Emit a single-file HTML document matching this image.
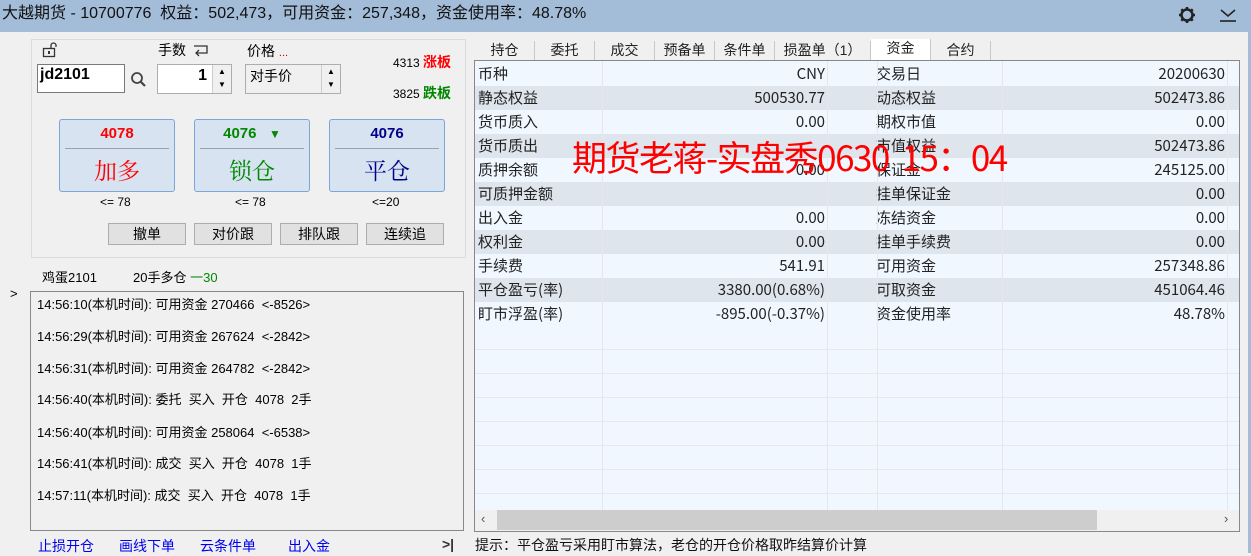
<!DOCTYPE html>
<html><head><meta charset="utf-8"><style>
*{margin:0;padding:0;box-sizing:border-box}
body{width:1251px;height:553px;background:#f0f0f0;position:relative;overflow:hidden;font-family:"Liberation Sans","Noto Sans CJK SC",sans-serif;font-size:13px;color:#000}
.a{position:absolute;white-space:nowrap}
.top{left:0;top:0;width:1251px;height:32px;background:#a3bcd8;font-size:16px;line-height:28px;padding-left:2px;color:#111}
.bb{position:absolute;width:116px;height:73px;background:#d7e3f1;border:1px solid #7aa6d8;border-radius:3px}
.bb .n{position:absolute;top:5px;left:0;width:100%;text-align:center;font-weight:bold;font-size:15px}
.bb .l{position:absolute;top:28px;left:5px;right:5px;border-top:1px solid #a0a0a0}
.bb .t{position:absolute;top:33px;left:0;width:100%;text-align:center;font-family:"Noto Serif CJK SC",serif;font-size:23px}
.sb{position:absolute;top:223px;width:78px;height:22px;background:#e1e1e1;border:1px solid #adadad;text-align:center;font-size:14px;line-height:20px}
.tab{position:absolute;top:41px;height:20px;width:60px;text-align:center;font-size:14px;line-height:19px;border-right:1px solid #c8c8c8;color:#222}
.row{position:absolute;left:475px;width:764px;height:24px;font-family:"Noto Sans CJK SC",sans-serif;font-size:15px;line-height:23px;color:#222}
.row span{position:absolute;top:0}
.vl{position:absolute;top:61px;height:449px;border-left:1px solid #e4e8ee}
.log{position:absolute;left:37px;font-size:13px}
.lk{position:absolute;top:536px;color:#0000ee;font-size:14px}
</style></head><body>
<div class="a top">大越期货 - 10700776&nbsp; 权益：502,473，可用资金：257,348，资金使用率：48.78%</div>
<svg class="a" style="left:1176px;top:5px" width="22" height="20" viewBox="0 0 22 20"><circle cx="11" cy="10" r="5.5" fill="none" stroke="#222" stroke-width="2.5"/><g stroke="#222" stroke-width="2.5"><line x1="11" y1="2" x2="11" y2="4.5"/><line x1="11" y1="15.5" x2="11" y2="18"/><line x1="3" y1="10" x2="5.5" y2="10"/><line x1="16.5" y1="10" x2="19" y2="10"/><line x1="5.3" y1="4.3" x2="7" y2="6"/><line x1="15" y1="14" x2="16.7" y2="15.7"/><line x1="5.3" y1="15.7" x2="7" y2="14"/><line x1="15" y1="6" x2="16.7" y2="4.3"/></g></svg>
<svg class="a" style="left:1218px;top:6px" width="20" height="18"><polyline points="3,4 10,10 17,4" fill="none" stroke="#222" stroke-width="1.6"/><line x1="2" y1="15" x2="18" y2="15" stroke="#222" stroke-width="1.6"/></svg>
<div class="a" style="left:1248px;top:32px;width:3px;height:521px;background:#a3bcd8"></div>

<div class="a" style="left:31px;top:39px;width:435px;height:219px;border:1px solid #dcdcdc"></div>
<svg class="a" style="left:42px;top:42px" width="18" height="16"><rect x="1.5" y="6.5" width="11" height="8" fill="none" stroke="#333" stroke-width="1.3"/><rect x="6" y="9" width="2" height="3" fill="#333"/><path d="M9 6.5V3.5a2.5 2.5 0 0 1 5 0V5" fill="none" stroke="#333" stroke-width="1.3"/></svg>
<div class="a" style="left:158px;top:40px;font-size:14px">手数</div>
<svg class="a" style="left:192px;top:44px" width="18" height="14"><path d="M2 2h13v7H5" fill="none" stroke="#333" stroke-width="1.3"/><path d="M7 6l-3 3 3 3" fill="none" stroke="#333" stroke-width="1.3"/></svg>
<div class="a" style="left:247px;top:41px;font-size:14px">价格 <span style="color:#c00;font-size:11px">...</span></div>
<div class="a" style="left:393px;top:52px;font-size:12px">4313 <span style="color:#f00;font-weight:bold;font-size:14px">涨板</span></div>
<div class="a" style="left:393px;top:83px;font-size:12px">3825 <span style="color:#080;font-weight:bold;font-size:14px">跌板</span></div>
<div class="a" style="left:37px;top:64px;width:88px;height:29px;background:#fff;border:1px solid #7a7a7a;font-weight:bold;font-size:16px;padding:1px 2px">jd2101</div>
<svg class="a" style="left:130px;top:71px" width="17" height="17"><circle cx="7" cy="7" r="5" fill="none" stroke="#444" stroke-width="1.8"/><line x1="10.5" y1="10.5" x2="15" y2="15" stroke="#444" stroke-width="2.2"/></svg>
<div class="a" style="left:157px;top:64px;width:75px;height:30px;background:#fff;border:1px solid #adadad"><span class="a" style="right:24px;top:2px;font-weight:bold;font-size:16px">1</span><div class="a" style="right:0;top:0;width:19px;height:28px;background:#f0f0f0;border-left:1px solid #ccc;font-size:8px;text-align:center;line-height:13px">▲<br>▼</div></div>
<div class="a" style="left:245px;top:64px;width:96px;height:30px;background:#f0f0f0;border:1px solid #adadad"><span class="a" style="left:4px;top:1px;font-size:14px">对手价</span><div class="a" style="right:0;top:0;width:19px;height:28px;background:#f0f0f0;border-left:1px solid #ccc;font-size:8px;text-align:center;line-height:13px">▲<br>▼</div></div>

<div class="bb" style="left:59px;top:119px"><div class="n" style="color:#f00">4078</div><div class="l"></div><div class="t" style="color:#f00">加多</div></div>
<div class="bb" style="left:194px;top:119px"><div class="n" style="color:#080">4076 &nbsp; <span style="font-size:12px">▼</span></div><div class="l"></div><div class="t" style="color:#080">锁仓</div></div>
<div class="bb" style="left:329px;top:119px"><div class="n" style="color:#008">4076</div><div class="l"></div><div class="t" style="color:#008">平仓</div></div>
<div class="a" style="left:100px;top:195px;font-size:12px">&lt;= 78</div>
<div class="a" style="left:235px;top:195px;font-size:12px">&lt;= 78</div>
<div class="a" style="left:372px;top:195px;font-size:12px">&lt;=20</div>
<div class="sb" style="left:108px">撤单</div><div class="sb" style="left:194px">对价跟</div><div class="sb" style="left:280px">排队跟</div><div class="sb" style="left:366px">连续追</div>
<div class="a" style="left:42px;top:267px;font-size:13px">鸡蛋2101</div>
<div class="a" style="left:133px;top:267px;font-size:13px">20手多仓 <span style="color:#080">一</span><span style="color:#080">30</span></div>
<div class="a" style="left:10px;top:286px;font-size:13px">&gt;</div>
<div class="a" style="left:30px;top:291px;width:434px;height:240px;border:1px solid #888"></div>
<div class="log" style="top:294px">14:56:10(本机时间): 可用资金 270466&nbsp; &lt;-8526&gt;</div>
<div class="log" style="top:326px">14:56:29(本机时间): 可用资金 267624&nbsp; &lt;-2842&gt;</div>
<div class="log" style="top:358px">14:56:31(本机时间): 可用资金 264782&nbsp; &lt;-2842&gt;</div>
<div class="log" style="top:389px">14:56:40(本机时间): 委托&nbsp; 买入&nbsp; 开仓&nbsp; 4078&nbsp; 2手</div>
<div class="log" style="top:422px">14:56:40(本机时间): 可用资金 258064&nbsp; &lt;-6538&gt;</div>
<div class="log" style="top:453px">14:56:41(本机时间): 成交&nbsp; 买入&nbsp; 开仓&nbsp; 4078&nbsp; 1手</div>
<div class="log" style="top:485px">14:57:11(本机时间): 成交&nbsp; 买入&nbsp; 开仓&nbsp; 4078&nbsp; 1手</div>
<div class="lk" style="left:38px">止损开仓</div><div class="lk" style="left:119px">画线下单</div><div class="lk" style="left:200px">云条件单</div><div class="lk" style="left:288px">出入金</div>
<div class="a" style="left:442px;top:536px;font-size:14px;font-weight:bold;color:#333">&gt;|</div>

<div class="tab" style="left:475px">持仓</div><div class="tab" style="left:535px">委托</div><div class="tab" style="left:595px">成交</div><div class="tab" style="left:655px">预备单</div><div class="tab" style="left:715px">条件单</div><div class="tab" style="left:775px;width:96px">损盈单（1）</div><div class="tab" style="left:871px;background:#fff;top:39px;height:22px">资金</div><div class="tab" style="left:931px">合约</div>
<div class="a" style="left:474px;top:60px;width:766px;height:472px;border:1px solid #888;background:#f0f7ff"></div>
<div class="row" style="top:62px"><span style="left:3px">币种</span><span style="right:414px">CNY</span><span style="left:401px">交易日</span><span style="right:14px">20200630</span></div>
<div class="row" style="top:86px;background:#dfe5ec"><span style="left:3px">静态权益</span><span style="right:414px">500530.77</span><span style="left:401px">动态权益</span><span style="right:14px">502473.86</span></div>
<div class="row" style="top:110px"><span style="left:3px">货币质入</span><span style="right:414px">0.00</span><span style="left:401px">期权市值</span><span style="right:14px">0.00</span></div>
<div class="row" style="top:134px;background:#dfe5ec"><span style="left:3px">货币质出</span><span style="left:401px">市值权益</span><span style="right:14px">502473.86</span></div>
<div class="row" style="top:158px"><span style="left:3px">质押余额</span><span style="right:414px">0.00</span><span style="left:401px">保证金</span><span style="right:14px">245125.00</span></div>
<div class="row" style="top:182px;background:#dfe5ec"><span style="left:3px">可质押金额</span><span style="left:401px">挂单保证金</span><span style="right:14px">0.00</span></div>
<div class="row" style="top:206px"><span style="left:3px">出入金</span><span style="right:414px">0.00</span><span style="left:401px">冻结资金</span><span style="right:14px">0.00</span></div>
<div class="row" style="top:230px;background:#dfe5ec"><span style="left:3px">权利金</span><span style="right:414px">0.00</span><span style="left:401px">挂单手续费</span><span style="right:14px">0.00</span></div>
<div class="row" style="top:254px"><span style="left:3px">手续费</span><span style="right:414px">541.91</span><span style="left:401px">可用资金</span><span style="right:14px">257348.86</span></div>
<div class="row" style="top:278px;background:#dfe5ec"><span style="left:3px">平仓盈亏(率)</span><span style="right:414px">3380.00(0.68%)</span><span style="left:401px">可取资金</span><span style="right:14px">451064.46</span></div>
<div class="row" style="top:302px"><span style="left:3px">盯市浮盈(率)</span><span style="right:414px">-895.00(-0.37%)</span><span style="left:401px">资金使用率</span><span style="right:14px">48.78%</span></div>
<div class="a" style="left:475px;top:326px;width:764px;height:184px;background:repeating-linear-gradient(#f0f7ff 0 23px,#e6eaee 23px 24px)"></div>
<div class="vl" style="left:602px"></div><div class="vl" style="left:827px"></div><div class="vl" style="left:877px"></div><div class="vl" style="left:1002px"></div><div class="vl" style="left:1227px"></div>
<div class="a" style="left:572px;top:134px;font-family:'Noto Sans CJK SC',sans-serif;font-size:35px;line-height:46px;color:#f00;letter-spacing:-1.5px">期货老蒋-实盘秀0630&nbsp;&nbsp;15：04</div>
<div class="a" style="left:475px;top:510px;width:764px;height:21px;background:#f0f0f0"></div>
<div class="a" style="left:497px;top:510px;width:600px;height:20px;background:#cdcdcd"></div>
<div class="a" style="left:481px;top:511px;font-size:13px;color:#555">‹</div>
<div class="a" style="left:1224px;top:511px;font-size:13px;color:#555">›</div>
<div class="a" style="left:475px;top:535px;font-family:'Noto Sans CJK SC',sans-serif;font-size:14px;color:#111">提示：平仓盈亏采用盯市算法，老仓的开仓价格取昨结算价计算</div>
</body></html>
